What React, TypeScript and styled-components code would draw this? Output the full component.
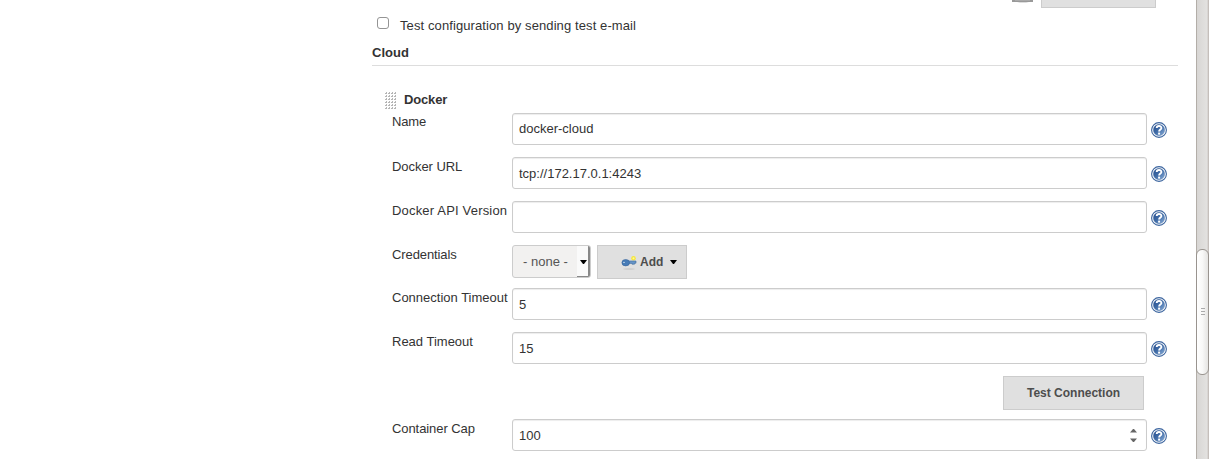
import React from "react";
import styled, { createGlobalStyle } from "styled-components";

const GlobalStyle = createGlobalStyle`
  * { box-sizing: border-box; }
  body {
    margin: 0;
    overflow: hidden;
    background: #fff;
    color: #333;
    font: 13px/15px "Liberation Sans", Arial, sans-serif;
  }
`;

const Page = styled.div`
  display: flex;
  height: 459px;
  overflow: hidden;
`;

const Content = styled.main`
  width: 806px;
  margin-left: 372px;
`;

const PreviousActions = styled.div`
  display: flex;
  height: 8px;
  padding-left: 640px;
`;

const ImageEdge = styled.svg`
  width: 21px;
  height: 4px;
  margin-right: 8px;
`;

const ButtonEdge = styled.div`
  width: 115px;
  height: 8px;
  border: 1px solid #ccc;
  border-top: 0;
  background: #e0e0e0;
`;

const CheckLabel = styled.label`
  display: flex;
  align-items: flex-start;
  height: 36px;
  padding: 9px 0 0 5px;
`;

const Checkbox = styled.input`
  appearance: none;
  width: 12px;
  height: 12px;
  margin: 0 11px 0 0;
  border: 1px solid #949494;
  border-radius: 3px;
  background: #fff;
`;

const CheckText = styled.span`
  margin-top: 1px;
  letter-spacing: 0.1px;
`;

const SectionTitle = styled.h2`
  height: 22px;
  margin: 0;
  padding-top: 1px;
  border-bottom: 1px solid #ddd;
  font-size: 13px;
  line-height: 15px;
`;

const CloudHeader = styled.div`
  display: flex;
  height: 47px;
  padding: 26px 0 0 13px;
`;

const DragHandle = styled.svg`
  width: 12px;
  height: 18px;
  margin-right: 7px;
`;

const CloudTitle = styled.h3`
  margin: 0;
  font-size: 13px;
  line-height: 15px;
  letter-spacing: -0.15px;
`;

const Row = styled.div<{ $height?: number }>`
  display: grid;
  grid-template-columns: 120px 635px 20px;
  align-items: start;
  height: ${({ $height = 44 }) => $height}px;
  padding-left: 20px;
`;

const Label = styled.label<{ $top?: number; $spacing?: number }>`
  padding-top: ${({ $top = 2 }) => $top}px;
  letter-spacing: ${({ $spacing = 0 }) => $spacing}px;
  white-space: nowrap;
`;

const Field = styled.div<{ $lift?: number }>`
  display: flex;
  align-items: center;
  justify-content: space-between;
  height: 32px;
  padding: 0 9px ${({ $lift = 0 }) => $lift}px 6px;
  border: 1px solid #ccc;
  border-radius: 3px;
  background: #fff;
  box-shadow: inset 0 1px 1px rgba(0, 0, 0, 0.075);
`;

const HelpIcon = styled.svg`
  width: 16px;
  height: 16px;
  margin: 9px 0 0 4px;
`;

const Controls = styled.div`
  display: flex;
  gap: 6px;
`;

const Select = styled.div`
  display: flex;
  justify-content: space-between;
  width: 79px;
  height: 33px;
  border: 1px solid #ccc;
  border-radius: 3px;
  background: #f2f1f0;
  color: #555;
  line-height: 31px;
  padding-left: 10px;
`;

const SelectArrow = styled.span`
  display: flex;
  align-items: center;
  width: 13px;
  height: 31px;
  padding-left: 3px;
  border-right: 2px solid #888;
  border-bottom: 1px solid #888;
  border-radius: 0 2px 2px 0;
  background: #fafafa;
`;

const SelectDown = styled.svg`
  width: 7px;
  height: 4px;
  margin-top: 2px;
`;

const Button = styled.button<{ $width: number }>`
  display: flex;
  align-items: center;
  justify-content: center;
  width: ${({ $width }) => $width}px;
  height: 34px;
  margin: 0;
  padding: 0;
  border: 1px solid #ccc;
  background: #e0e0e0;
  color: #4d4d4d;
  font: bold 12px/15px "Liberation Sans", Arial, sans-serif;
`;

const AddButton = styled(Button)`
  justify-content: flex-start;
  padding-left: 23px;
`;

const KeyIcon = styled.svg`
  width: 16px;
  height: 16px;
  margin-right: 3px;
`;

const MenuArrow = styled.svg`
  width: 7px;
  height: 4px;
  margin-left: 7px;
`;

const ButtonRow = styled.div`
  display: flex;
  justify-content: flex-end;
  height: 43px;
  padding-right: 34px;
`;

const Spinner = styled.svg`
  width: 7px;
  height: 13px;
`;

const ScrollTrack = styled.div`
  width: 13px;
  height: 459px;
  margin-left: 18px;
  padding-top: 249px;
  border-left: 1px solid #b3aea8;
  background: linear-gradient(90deg, #d8d6d4, #e3e2e0 85%, #c5bfbb 92%);
`;

const ScrollThumb = styled.div`
  display: flex;
  align-items: center;
  justify-content: center;
  width: 13px;
  height: 126px;
  margin-left: -1px;
  border: 1px solid #99948f;
  border-radius: 6px;
  background: linear-gradient(90deg, #fff, #f8f8f7 50%, #e5e4e2);
`;

function Help() {
  return (
    <HelpIcon viewBox="0 0 16 16" aria-label="Help">
      <defs>
        <linearGradient id="help-fill" x1="0" y1="0" x2="1" y2="1">
          <stop offset="0" stopColor="#234b8c" />
          <stop offset="0.5" stopColor="#416da8" />
          <stop offset="1" stopColor="#8eb2dc" />
        </linearGradient>
      </defs>
      <circle cx="8" cy="8" r="7.4" fill="#fff" stroke="#3c659f" strokeWidth="1.1" />
      <circle cx="8" cy="8" r="5.7" fill="url(#help-fill)" stroke="#3d659e" strokeWidth="0.3" />
      <path d="M5.7 6.1C5.7 3.4 10.4 3.4 10.4 5.9C10.4 7.6 8.1 7.6 8.1 9.6" fill="none" stroke="#fff" strokeWidth="1.9" />
      <rect x="7.1" y="10.6" width="2" height="2" fill="#fff" />
    </HelpIcon>
  );
}

function Down() {
  return (
    <MenuArrow viewBox="0 0 7 4" aria-hidden="true">
      <path d="M0 0H7L4 4H3Z" fill="#000" />
    </MenuArrow>
  );
}

type FormRowProps = {
  label: string;
  value: string;
  labelTop?: number;
  labelSpacing?: number;
  lift?: number;
  height?: number;
  numeric?: boolean;
};

function FormRow({ label, value, labelTop, labelSpacing, lift, height, numeric }: FormRowProps) {
  return (
    <Row $height={height}>
      <Label $top={labelTop} $spacing={labelSpacing}>{label}</Label>
      <Field $lift={lift}>
        <span>{value}</span>
        {numeric && (
          <Spinner viewBox="0 0 7 13" aria-hidden="true">
            <path d="M0 3.5L3 0H4L7 3.5ZM0 9.5H7L4 13H3Z" fill="#666" />
          </Spinner>
        )}
      </Field>
      <Help />
    </Row>
  );
}

const dotRows = [0, 3, 6, 9, 12, 15];
const dotColumns = [0, 3, 6, 9];

export default function App() {
  return (
    <Page>
      <GlobalStyle />
      <Content>
        <PreviousActions>
          <ImageEdge viewBox="0 0 21 4" aria-hidden="true">
            <path d="M0 0H21V2H0Z" fill="#999" />
            <path d="M3 0H18V1H3Z" fill="#aaa" />
            <path d="M5 2H17L14 3H8Z" fill="#ddd" />
          </ImageEdge>
          <ButtonEdge />
        </PreviousActions>
        <CheckLabel>
          <Checkbox type="checkbox" />
          <CheckText>Test configuration by sending test e-mail</CheckText>
        </CheckLabel>
        <SectionTitle>Cloud</SectionTitle>
        <CloudHeader>
          <DragHandle viewBox="0 0 12 18" aria-hidden="true">
            {dotRows.map((y) =>
              dotColumns.map((x) => (
                <path key={`${x}-${y}`} d={`M${x} ${y + 1}H${x + 1}V${y}H${x + 2}V${y + 2}H${x}Z`} fill="#b5b5b5" />
              ))
            )}
          </DragHandle>
          <CloudTitle>Docker</CloudTitle>
        </CloudHeader>
        <FormRow label="Name" value="docker-cloud" labelTop={1} labelSpacing={-0.15} lift={2} />
        <FormRow label="Docker URL" value="tcp://172.17.0.1:4243" labelSpacing={-0.05} />
        <FormRow label="Docker API Version" value="" labelSpacing={0.18} />
        <Row $height={43}>
          <Label $spacing={-0.1}>Credentials</Label>
          <Controls>
            <Select>
              - none -
              <SelectArrow>
                <SelectDown viewBox="0 0 7 4" aria-hidden="true">
                  <path d="M0 0H7L4 4H3Z" fill="#000" />
                </SelectDown>
              </SelectArrow>
            </Select>
            <AddButton $width={90}>
              <KeyIcon viewBox="0 0 16 16" aria-hidden="true">
                <ellipse cx="8" cy="15" rx="6" ry="0.7" fill="#c9c9c9" />
                <circle cx="12.5" cy="4.2" r="2.3" fill="#f5e63d" />
                <circle cx="12.5" cy="4.2" r="1" fill="#fff99a" />
                <path d="M6 7H15V9.2H13.5V10.2H11V9.4H6Z" fill="#6795c8" stroke="#3e6b9e" strokeWidth="0.6" />
                <ellipse cx="4.7" cy="8.7" rx="3.8" ry="3.2" fill="#467bb7" stroke="#356399" strokeWidth="0.6" />
                <ellipse cx="3" cy="8.4" rx="1" ry="0.7" fill="#b4cde5" />
              </KeyIcon>
              Add
              <Down />
            </AddButton>
          </Controls>
        </Row>
        <FormRow label="Connection Timeout" value="5" />
        <FormRow label="Read Timeout" value="15" />
        <ButtonRow>
          <Button $width={141}>Test Connection</Button>
        </ButtonRow>
        <FormRow label="Container Cap" value="100" labelSpacing={-0.08} height={40} numeric />
      </Content>
      <ScrollTrack>
        <ScrollThumb>
          <svg width="4" height="8" viewBox="0 0 4 8" aria-hidden="true">
            <path d="M0 .5H4M0 3.5H4M0 6.5H4" stroke="#aaa" />
          </svg>
        </ScrollThumb>
      </ScrollTrack>
    </Page>
  );
}
